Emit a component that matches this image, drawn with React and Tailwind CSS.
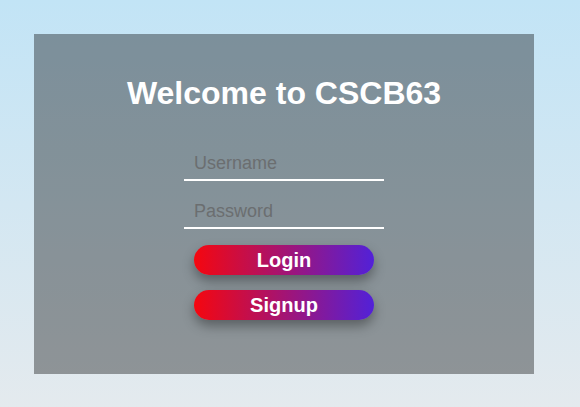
export default function App() {
  return (
    <div className="min-h-screen w-full bg-[linear-gradient(to_bottom,#c2e4f6,#e4eaee)] p-[34px] font-['Liberation_Sans',Arial,sans-serif]">
      <div className="w-[500px] h-[340px] bg-black/[0.37] flex flex-col items-center pt-[41px]">
        <h1 className="text-[32px] leading-[37px] font-bold text-white">
          Welcome to CSCB63
        </h1>

        <form
          className="mt-[33px] flex flex-col items-center"
          onSubmit={(e) => e.preventDefault()}
        >
          <input
            type="text"
            placeholder="Username"
            className="w-[200px] h-[36px] bg-transparent border-b-2 border-white pl-[10px] pt-[3px] text-[18px] text-white outline-none placeholder:text-[#6b6e70]"
          />
          <input
            type="password"
            placeholder="Password"
            className="mt-[12px] w-[200px] h-[36px] bg-transparent border-b-2 border-white pl-[10px] pt-[3px] text-[18px] text-white outline-none placeholder:text-[#6b6e70]"
          />

          <button className="mt-[16px] w-[180px] h-[30px] rounded-full bg-[linear-gradient(to_right,#f5070f,#5221d8)] text-white text-[20px] font-bold leading-none shadow-[0_6px_12px_rgba(0,0,0,0.35)]">
            Login
          </button>
          <button className="mt-[15px] w-[180px] h-[30px] rounded-full bg-[linear-gradient(to_right,#f5070f,#5221d8)] text-white text-[20px] font-bold leading-none shadow-[0_6px_12px_rgba(0,0,0,0.35)]">
            Signup
          </button>
        </form>
      </div>
    </div>
  );
}
